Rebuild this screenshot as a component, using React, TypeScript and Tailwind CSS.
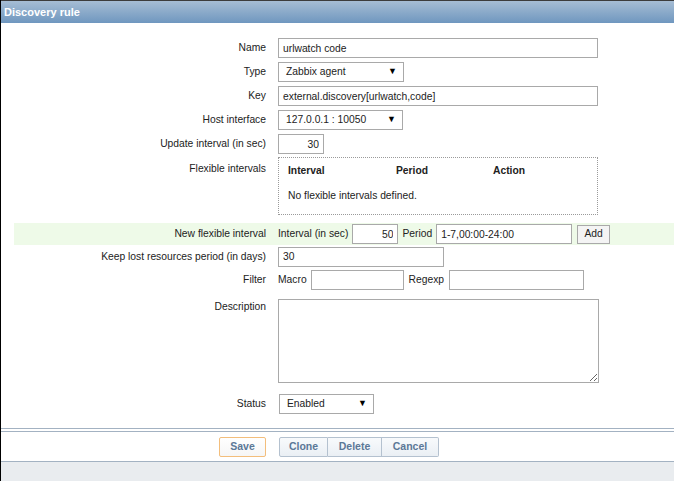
import React from 'react';

const Label: React.FC<{ children?: React.ReactNode; top?: boolean }> = ({ children, top }) => (
  <div className={`w-[252px] shrink-0 text-right ${top ? 'pt-[0px]' : ''}`}>{children}</div>
);

const TextBox: React.FC<{ value?: string; className?: string; right?: boolean }> = ({ value = '', className = '', right }) => (
  <input
    readOnly
    value={value}
    className={`h-[20px] border border-[#a9a9a9] bg-white px-[4px] text-[10.3px] text-[#222] outline-none ${right ? 'text-right' : ''} ${className}`}
  />
);

const Select: React.FC<{ value: string; className?: string }> = ({ value, className = '' }) => (
  <div className={`flex h-[20px] items-center justify-between border border-[#a9a9a9] bg-white pl-[7px] pr-[6px] ${className}`}>
    <span>{value}</span>
    <span className="text-[9px] text-black">▼</span>
  </div>
);

export default function App() {
  return (
    <div className="flex h-[481px] w-[674px] flex-col overflow-hidden border-l border-black bg-white font-['Liberation_Sans',Arial,sans-serif] text-[10.3px] text-[#222]">
      {/* Header */}
      <div className="h-[1px] bg-[#3c3c3c]" />
      <div className="flex h-[22px] items-center bg-gradient-to-b from-[#a6bdd4] to-[#6f97bf] pl-[3px] text-[11px] font-bold text-white">
        Discovery rule
      </div>

      {/* Form */}
      <div className="pl-[13px] pt-[13px]">
        <div className="flex h-[24px] items-center">
          <Label>Name</Label>
          <div className="pl-[12px]">
            <TextBox value="urlwatch code" className="w-[320px]" />
          </div>
        </div>
        <div className="flex h-[24px] items-center">
          <Label>Type</Label>
          <div className="pl-[12px]">
            <Select value="Zabbix agent" className="w-[126px]" />
          </div>
        </div>
        <div className="flex h-[24px] items-center">
          <Label>Key</Label>
          <div className="pl-[12px]">
            <TextBox value="external.discovery[urlwatch,code]" className="w-[320px]" />
          </div>
        </div>
        <div className="flex h-[24px] items-center">
          <Label>Host interface</Label>
          <div className="pl-[12px]">
            <Select value="127.0.0.1 : 10050" className="w-[125px]" />
          </div>
        </div>
        <div className="flex h-[24px] items-center">
          <Label>Update interval (in sec)</Label>
          <div className="pl-[12px]">
            <TextBox value="30" right className="w-[46px]" />
          </div>
        </div>

        {/* Flexible intervals */}
        <div className="flex pt-[1px] pb-[8px]">
          <Label top>
            <span className="block pt-[4px]">Flexible intervals</span>
          </Label>
          <div className="pl-[12px]">
            <div className="h-[58px] w-[320px] border border-dotted border-[#9a9a9a] px-[9px] pt-[5px]">
              <div className="flex font-bold">
                <span className="w-[108px]">Interval</span>
                <span className="w-[97px]">Period</span>
                <span>Action</span>
              </div>
              <div className="pt-[10px]">No flexible intervals defined.</div>
            </div>
          </div>
        </div>

        {/* New flexible interval */}
        <div className="flex h-[22px] items-center bg-[#eefae8]">
          <Label>New flexible interval</Label>
          <div className="flex items-center pl-[12px]">
            <span>Interval (in sec)</span>
            <TextBox value="50" right className="ml-[4px] w-[46px]" />
            <span className="ml-[4px]">Period</span>
            <TextBox value="1-7,00:00-24:00" className="ml-[4px] w-[136px]" />
            <button className="ml-[5px] h-[19px] w-[33px] border border-[#a9a9a9] bg-[#f4f4f4] text-[10.3px] text-[#222]">
              Add
            </button>
          </div>
        </div>

        <div className="flex h-[23px] items-center">
          <Label>Keep lost resources period (in days)</Label>
          <div className="pl-[12px]">
            <TextBox value="30" className="w-[166px]" />
          </div>
        </div>
        <div className="flex h-[24px] items-center">
          <Label>Filter</Label>
          <div className="flex items-center pl-[12px]">
            <span>Macro</span>
            <TextBox className="ml-[4px] w-[93px]" />
            <span className="ml-[5px]">Regexp</span>
            <TextBox className="ml-[5px] w-[135px]" />
          </div>
        </div>
        <div className="flex pt-[7px]">
          <Label top>
            <span className="block pt-[0px]">Description</span>
          </Label>
          <div className="pl-[12px]">
            <textarea readOnly className="block h-[84px] w-[321px] border border-[#a9a9a9] bg-white outline-none" />
          </div>
        </div>
        <div className="mt-[9px] flex h-[24px] items-center">
          <Label>Status</Label>
          <div className="pl-[13px]">
            <Select value="Enabled" className="w-[95px]" />
          </div>
        </div>
      </div>

      {/* Footer buttons */}
      <div className="mt-[12px] h-[1px] bg-[#a3b2c2]" />
      <div className="mt-[2px] h-[1px] bg-[#a3b2c2]" />
      <div className="flex h-[29px] items-center pl-[13px]">
        <div className="flex w-[252px] justify-end">
          <button className="h-[20px] w-[47px] rounded-[2px] border border-[#f3be7c] bg-gradient-to-b from-white to-[#f6f6f6] text-[10.5px] font-bold text-[#5b7897]">
            Save
          </button>
        </div>
        <div className="flex pl-[13px]">
          <button className="h-[20px] w-[49px] rounded-l-[2px] border border-[#b4c1cf] bg-gradient-to-b from-[#f8fafc] to-[#eaeff4] text-[10.5px] font-bold text-[#5b7897]">
            Clone
          </button>
          <button className="h-[20px] w-[54px] border border-l-0 border-[#b4c1cf] bg-gradient-to-b from-[#f8fafc] to-[#eaeff4] text-[10.5px] font-bold text-[#5b7897]">
            Delete
          </button>
          <button className="h-[20px] w-[57px] rounded-r-[2px] border border-l-0 border-[#b4c1cf] bg-gradient-to-b from-[#f8fafc] to-[#eaeff4] text-[10.5px] font-bold text-[#5b7897]">
            Cancel
          </button>
        </div>
      </div>
      <div className="h-[1px] bg-[#a3b2c2]" />
      <div className="flex-1 bg-[#e9ecef]" />
    </div>
  );
}
